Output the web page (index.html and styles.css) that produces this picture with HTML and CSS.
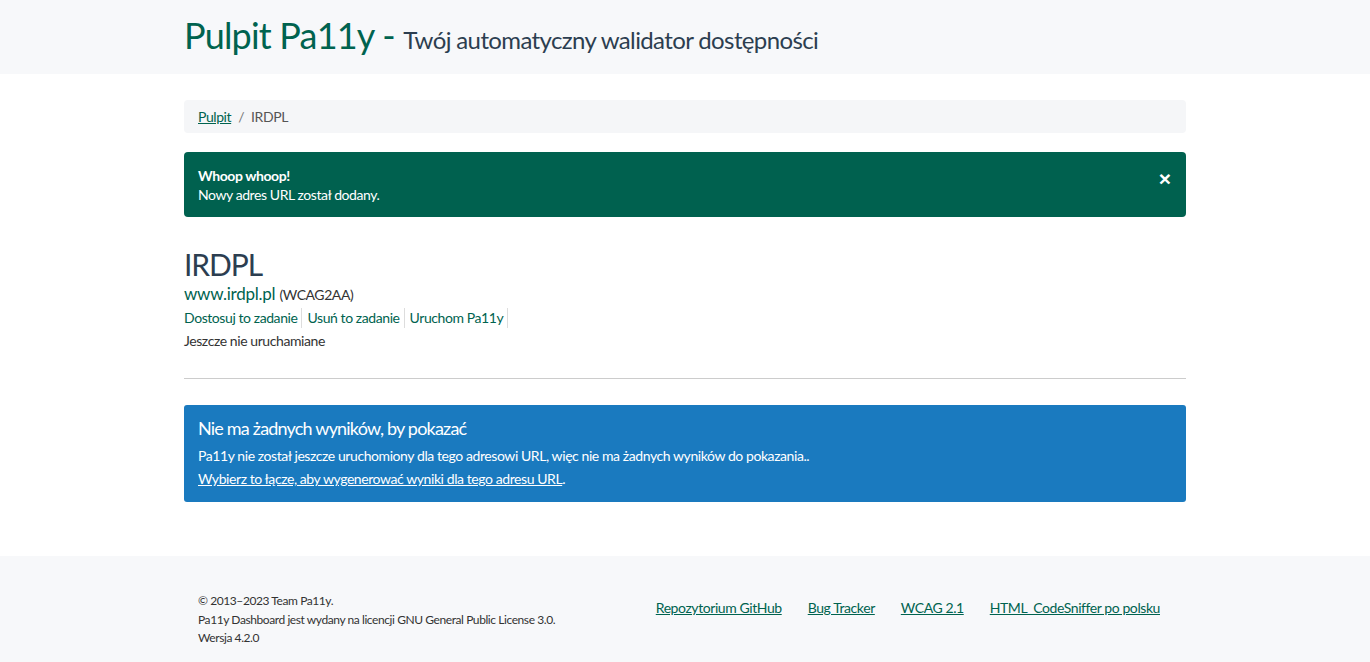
FILE: index.html
```html
<!DOCTYPE html>
<html lang="pl">
<head>
<meta charset="utf-8">
<title>Pulpit Pa11y</title>
<link rel="stylesheet" href="styles.css">
</head>
<body>
<header class="page-header">
  <div class="container">
    <h1 class="brand"><span class="brand-name">Pulpit Pa11y</span> - <small class="brand-tag">Twój automatyczny walidator dostępności</small></h1>
  </div>
</header>
<main class="container main">
  <nav class="breadcrumb"><a href="#">Pulpit</a><span class="sep">/</span><span class="current">IRDPL</span></nav>
  <div class="alert">
    <div class="alert-text"><strong>Whoop whoop!</strong><br>Nowy adres URL został dodany.</div>
    <button class="close" aria-label="Zamknij">×</button>
  </div>
  <section class="task">
    <h2 class="task-title">IRDPL</h2>
    <p class="task-url"><a href="#">www.irdpl.pl</a> <small>(WCAG2AA)</small></p>
    <ul class="task-actions">
      <li><a href="#">Dostosuj to zadanie</a></li>
      <li><a href="#">Usuń to zadanie</a></li>
      <li><a href="#">Uruchom Pa11y</a></li>
    </ul>
    <p class="task-status">Jeszcze nie uruchamiane</p>
  </section>
  <hr class="divider">
  <div class="info">
    <h3 class="info-title">Nie ma żadnych wyników, by pokazać</h3>
    <p>Pa11y nie został jeszcze uruchomiony dla tego adresowi URL, więc nie ma żadnych wyników do pokazania..</p>
    <p><a href="#">Wybierz to łącze, aby wygenerować wyniki dla tego adresu URL</a>.</p>
  </div>
</main>
<footer class="footer">
  <div class="container footer-inner">
    <div class="footer-text">
      <p>© 2013–2023 Team Pa11y.</p>
      <p>Pa11y Dashboard jest wydany na licencji GNU General Public License 3.0.</p>
      <p>Wersja 4.2.0</p>
    </div>
    <ul class="footer-links">
      <li><a href="#">Repozytorium GitHub</a></li>
      <li><a href="#">Bug Tracker</a></li>
      <li><a href="#">WCAG 2.1</a></li>
      <li><a href="#">HTML_CodeSniffer po polsku</a></li>
    </ul>
  </div>
</footer>
</body>
</html>
```

FILE: styles.css
```css
* { box-sizing: border-box; }
html, body { margin: 0; padding: 0; }
body {
  font-family: Lato, "Open Sans", "Liberation Sans", sans-serif;
  font-size: 14px;
  line-height: 1.42857;
  letter-spacing: -0.42px;
  color: #333;
  background: #fff;
}
p { margin: 0; }
a { color: #00634f; }
.container { width: 1002px; margin: 0 auto; }

.page-header { background: #f7f8fa; height: 74px; }
.brand {
  margin: 0;
  padding-top: 13px;
  font-weight: 400;
  font-size: 36px;
  line-height: 44px;
  letter-spacing: -0.8px;
  color: #00634f;
}
.brand-tag { font-size: 24px; color: #2c3e50; letter-spacing: -0.62px; }

.main { padding-top: 26px; }
.breadcrumb {
  background: #f5f6f8;
  border-radius: 4px;
  height: 33px;
  padding: 7px 14px;
  color: #555;
}
.breadcrumb a { color: #00634f; }
.breadcrumb .sep { padding: 0 7px; color: #777; }

.alert {
  margin-top: 19px;
  background: #00614f;
  color: #fff;
  border-radius: 4px;
  padding: 14px 14px 13px;
  display: flex;
  justify-content: space-between;
  align-items: flex-start;
  line-height: 19px;
}
.close {
  background: none;
  border: 0;
  color: #fff;
  font-family: "Liberation Sans", sans-serif;
  font-weight: 700;
  font-size: 21px;
  line-height: 21px;
  padding: 0 1px 0 0;
  margin-top: 2px;
  cursor: pointer;
}

.task { padding-top: 29px; }
.task-title {
  margin: 0;
  font-size: 30px;
  font-weight: 400;
  line-height: 36px;
  letter-spacing: -1.1px;
  color: #2c3e50;
}
.task-url { font-size: 17px; line-height: 24px; margin-top: 0; letter-spacing: -0.25px; }
.task-url a { text-decoration: none; color: #00634f; }
.task-url small { font-size: 14px; color: #333; letter-spacing: -0.42px; }
.task-actions {
  list-style: none;
  margin: 0;
  padding: 0;
  display: flex;
  line-height: 20px;
  margin-top: 1px;
}
.task-actions li { border-right: 1px solid #ddd; padding-right: 4px; margin-right: 5px; }
.task-actions a { text-decoration: none; }
.task-status { margin-top: 3px; line-height: 20px; }

.divider { border: 0; border-top: 1px solid #ccc; margin: 27px 0 26px; }

.info {
  background: #1a7abf;
  color: #fff;
  border-radius: 3px;
  padding: 13px 14px 12px;
}
.info-title { margin: 0 0 6px; font-size: 18px; font-weight: 400; line-height: 20px; letter-spacing: -0.8px; }
.info p { line-height: 23px; }
.info a { color: #fff; }

.footer { background: #f7f8fa; margin-top: 54px; height: 106px; }
.footer-inner {
  display: flex;
  justify-content: space-between;
  padding: 36px 26px 0 14px;
}
.footer-text { font-size: 12px; line-height: 18.5px; color: #333; letter-spacing: -0.42px; }
.footer-links {
  list-style: none;
  margin: 0;
  padding: 0;
  display: flex;
  gap: 26px;
  padding-top: 6px;
  line-height: 20px;
}
.footer-links a { color: #00634f; }
```
